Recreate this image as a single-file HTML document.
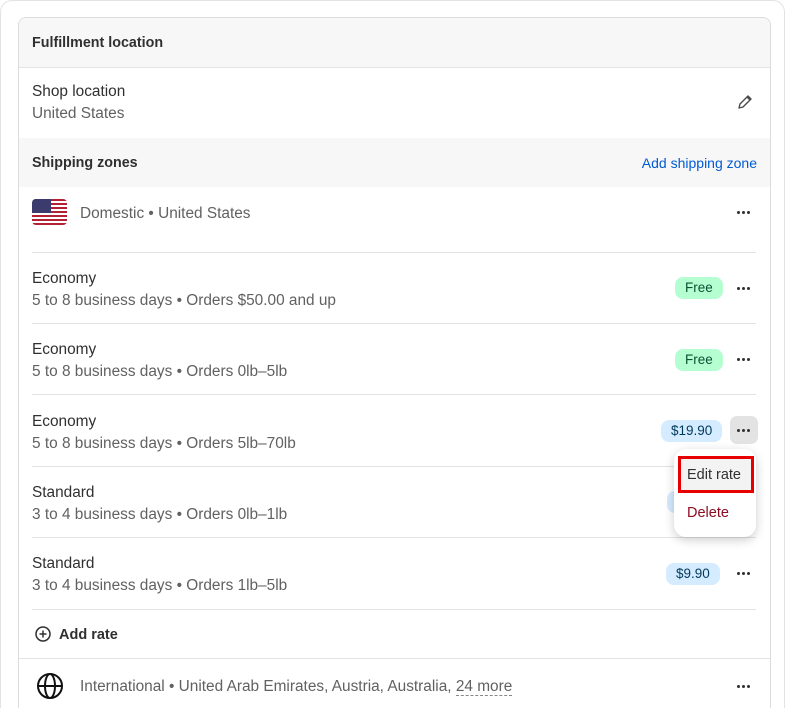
<html><head><style>
html,body{margin:0;width:791px;height:708px;overflow:hidden}
body{background:#fff;font-family:"Liberation Sans",sans-serif;font-size:15.4px;line-height:21px;color:#303030;position:relative}
.wrap{position:absolute;left:0;top:0;width:791px;height:708px;overflow:hidden}
.outer{position:absolute;left:0;top:0;width:783px;height:707px;border:1px solid #e3e3e3;border-bottom:none;border-radius:12px 12px 0 0;}
.card{position:absolute;left:18px;top:17px;width:751px;height:691px;border:1px solid #dcdcdc;border-bottom:none;border-radius:8px 8px 0 0;overflow:hidden;background:#fff}
.a{position:absolute;white-space:nowrap}
.hd{background:#f7f7f7;left:0;width:751px}
b{font-weight:bold;color:#303030;font-size:14.3px}
.g{color:#616161}
.line{position:absolute;left:13px;width:724px;height:1px;background:#e3e3e3}
.dots{position:absolute;width:28px;height:28px;border-radius:7px}
.dots::after{content:"";position:absolute;left:7px;top:13px;width:3px;height:3px;border-radius:50%;background:#303030;box-shadow:5px 0 0 #303030,10px 0 0 #303030}
.badge{position:absolute;height:22px;line-height:22px;border-radius:8px;padding:0 10px;font-size:13.5px}
.free{background:#b4fed2;color:#0c5132}
.blue{background:#d5ebff;color:#003a5a}
</style></head><body><div class="wrap">
<div class="outer"></div>
<div class="card">
<div class="a hd" style="top:0;height:49px;border-bottom:1px solid #e3e3e3"><b class="a" style="left:13px;top:15px">Fulfillment location</b></div>
<div class="a" style="left:13px;top:63px">Shop location</div>
<div class="a g" style="left:13px;top:85px">United States</div>
<svg class="a" style="left:717px;top:75px" width="18" height="18" viewBox="0 0 18 18"><path d="M3 15l1-4 8-8 3 3-8 8z M11 4l3 3" fill="none" stroke="#4a4a4a" stroke-width="1.4" stroke-linejoin="round"/></svg>
<div class="a hd" style="top:120px;height:49px"><b class="a" style="left:13px;top:15px">Shipping zones</b><span class="a" style="right:13px;top:15px;color:#005bd3;font-size:14px">Add shipping zone</span></div>
<svg class="a" style="left:13px;top:181px;border-radius:4px" width="35" height="26" viewBox="0 0 35 26"><rect width="35" height="26" fill="#fff"/><g fill="#b22234"><rect y="0" width="35" height="2"/><rect y="4" width="35" height="2"/><rect y="8" width="35" height="2"/><rect y="12" width="35" height="2"/><rect y="16" width="35" height="2"/><rect y="20" width="35" height="2"/><rect y="24" width="35" height="2"/></g><rect width="19" height="14" fill="#3c3b6e"/></svg>
<div class="a g" style="left:61px;top:185px">Domestic • United States</div>
<div class="dots" style="left:711px;top:180px"></div>
<div class="line" style="top:234px"></div>
<div class="a" style="left:13px;top:250px">Economy</div><div class="a g" style="left:13px;top:272px">5 to 8 business days • Orders $50.00 and up</div>
<div class="badge free" style="left:656px;top:259px">Free</div><div class="dots" style="left:711px;top:256px"></div>
<div class="line" style="top:305px"></div>
<div class="a" style="left:13px;top:321px">Economy</div><div class="a g" style="left:13px;top:343px">5 to 8 business days • Orders 0lb–5lb</div>
<div class="badge free" style="left:656px;top:331px">Free</div><div class="dots" style="left:711px;top:327px"></div>
<div class="line" style="top:376px"></div>
<div class="a" style="left:13px;top:393px">Economy</div><div class="a g" style="left:13px;top:415px">5 to 8 business days • Orders 5lb–70lb</div>
<div class="badge blue" style="left:642px;top:402px">$19.90</div><div class="dots" style="left:711px;top:398px;background:#e3e3e3"></div>
<div class="line" style="top:448px"></div>
<div class="a" style="left:13px;top:464px">Standard</div><div class="a g" style="left:13px;top:486px">3 to 4 business days • Orders 0lb–1lb</div>
<div class="badge blue" style="left:648px;top:473px">$</div>
<div class="line" style="top:519px"></div>
<div class="a" style="left:13px;top:535px">Standard</div><div class="a g" style="left:13px;top:557px">3 to 4 business days • Orders 1lb–5lb</div>
<div class="badge blue" style="left:647px;top:545px">$9.90</div><div class="dots" style="left:711px;top:541px"></div>
<div class="line" style="top:591px"></div>
<svg class="a" style="left:15px;top:607px" width="18" height="18" viewBox="0 0 18 18"><circle cx="9" cy="9" r="7" fill="none" stroke="#303030" stroke-width="1.5"/><path d="M9 5.5v7M5.5 9h7" stroke="#303030" stroke-width="1.5"/></svg>
<div class="a" style="left:40px;top:607px;font-weight:bold;color:#303030;font-size:14.5px">Add rate</div>
<div class="a" style="left:0;top:640px;width:751px;height:1px;background:#e3e3e3"></div>
<svg class="a" style="left:17px;top:654px" width="28" height="28" viewBox="0 0 28 28" fill="none" stroke="#111" stroke-width="2"><circle cx="14" cy="14" r="12"/><ellipse cx="14" cy="14" rx="5" ry="12"/><path d="M2 14h24"/></svg>
<div class="a g" style="left:61px;top:658px">International • United Arab Emirates, Austria, Australia, <span style="border-bottom:1px dashed #888">24 more</span></div>
<div class="dots" style="left:711px;top:654px"></div>
</div>
<div class="a" style="left:674px;top:449px;width:82px;height:88px;background:#fff;border-radius:12px;box-shadow:0 3px 10px rgba(0,0,0,.2)"></div>
<div class="a" style="left:678px;top:456px;width:70px;height:31px;border:3px solid #e80000;background:#f3f3f3;"></div>
<div class="a" style="left:687px;top:465px;font-size:14.5px">Edit rate</div>
<div class="a" style="left:687px;top:503px;color:#8e0b21;font-size:14.5px">Delete</div>
</div></body></html>
